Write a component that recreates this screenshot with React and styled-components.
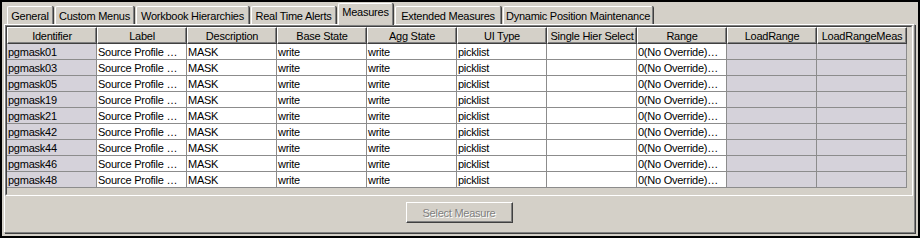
import React from 'react'
import styled, { createGlobalStyle } from 'styled-components'

const GlobalStyle = createGlobalStyle`
	html, body {
		margin: 0;
		padding: 0;
		background: #d4d0c8;
	}
	* {
		box-sizing: border-box;
	}
`

const Frame = styled.div`
	width: 920px;
	height: 238px;
	border: 2px solid #000;
	padding: 1px 2px 2px 2px;
	background: #d4d0c8;
	display: flex;
	flex-direction: column;
	font-family: "Liberation Sans", Arial, sans-serif;
	font-size: 11px;
	letter-spacing: -0.25px;
	color: #000;
`

const TabStrip = styled.div`
	display: flex;
	align-items: flex-end;
	height: 21px;
	padding-left: 3px;
	gap: 2px;
	position: relative;
	z-index: 1;
`

const Tab = styled.div`
	width: ${p => p.$w}px;
	height: ${p => (p.$active ? 22 : 18)}px;
	margin-bottom: ${p => (p.$active ? -1 : 0)}px;
	display: flex;
	align-items: ${p => (p.$active ? 'flex-start' : 'center')};
	padding-top: ${p => (p.$active ? 2 : 0)}px;
	justify-content: center;
	white-space: nowrap;
	background: #d4d0c8;
	border-top: 1px solid #fff;
	border-left: 1px solid #fff;
	border-right: 1px solid #808080;
	box-shadow: 1px 0 0 #404040;
	border-radius: 2px 2px 0 0;
`

const Panel = styled.div`
	flex: 1;
	display: flex;
	flex-direction: column;
	align-items: center;
	border-top: 1px solid #fff;
	border-left: 1px solid #fff;
	border-right: 1px solid #808080;
	border-bottom: 1px solid #808080;
	box-shadow: 1px 1px 0 #404040;
	margin-right: 1px;
	margin-bottom: 1px;
	padding-right: 1px;
`

const GridBox = styled.div`
	align-self: stretch;
	height: 171px;
	border-top: 1px solid #808080;
	border-left: 1px solid #808080;
	border-right: 1px solid #fff;
	border-bottom: 1px solid #fff;
`

const GridInner = styled.div`
	height: 100%;
	border-top: 1px solid #404040;
	border-left: 1px solid #404040;
	border-right: 1px solid #d4d0c8;
	border-bottom: 1px solid #d4d0c8;
	overflow: hidden;
`

const Row = styled.div`
	display: flex;
	height: ${p => (p.$header ? 17 : 16)}px;
`

const HeadCell = styled.div`
	width: 90px;
	flex: none;
	display: flex;
	align-items: center;
	justify-content: center;
	white-space: nowrap;
	overflow: hidden;
	background: #d4d0c8;
	border-top: 1px solid #fff;
	border-left: 1px solid #fff;
	border-right: 1px solid #404040;
	border-bottom: 1px solid #404040;
	box-shadow: inset -1px -1px 0 #808080;
`

const Cell = styled.div`
	width: 90px;
	flex: none;
	display: flex;
	align-items: center;
	padding-left: 1px;
	white-space: nowrap;
	overflow: hidden;
	background: ${p => (p.$shaded ? '#d5d2da' : '#fff')};
	border-right: 1px solid #8c8c8c;
	border-bottom: 1px solid #8c8c8c;
`

const Footer = styled.div`
	display: flex;
	justify-content: center;
	padding-top: 6px;
`

const Button = styled.div`
	width: 107px;
	height: 21px;
	display: flex;
	align-items: center;
	justify-content: center;
	color: #808080;
	text-shadow: 1px 1px 0 #fff;
	background: #d4d0c8;
	border-top: 1px solid #fff;
	border-left: 1px solid #fff;
	border-right: 1px solid #404040;
	border-bottom: 1px solid #404040;
	box-shadow: inset -1px -1px 0 #808080;
`

const tabs = [
	['General', 46],
	['Custom Menus', 79],
	['Workbook Hierarchies', 113],
	['Real Time Alerts', 85],
	['Measures', 55],
	['Extended Measures', 106],
	['Dynamic Position Maintenance', 150],
]

const columns = [
	'Identifier', 'Label', 'Description', 'Base State', 'Agg State',
	'UI Type', 'Single Hier Select', 'Range', 'LoadRange', 'LoadRangeMeas',
]

const ids = ['01', '03', '05', '19', '21', '42', '44', '46', '48']

const shaded = [0, 8, 9]

export default function App() {
	return (
		<>
			<GlobalStyle />
			<Frame>
				<TabStrip>
					{tabs.map(([name, w]) => (
						<Tab key={name} $w={w} $active={name === 'Measures'}>{name}</Tab>
					))}
				</TabStrip>
				<Panel>
					<GridBox>
						<GridInner>
							<Row $header>
								{columns.map(c => <HeadCell key={c}>{c}</HeadCell>)}
							</Row>
							{ids.map(id => {
								const values = [
									'pgmask' + id, 'Source Profile …', 'MASK', 'write', 'write',
									'picklist', '', '0(No Override)…', '', '',
								]
								return (
									<Row key={id}>
										{values.map((v, i) => (
											<Cell key={i} $shaded={shaded.includes(i)}>{v}</Cell>
										))}
									</Row>
								)
							})}
						</GridInner>
					</GridBox>
					<Footer>
						<Button>Select Measure</Button>
					</Footer>
				</Panel>
			</Frame>
		</>
	)
}
